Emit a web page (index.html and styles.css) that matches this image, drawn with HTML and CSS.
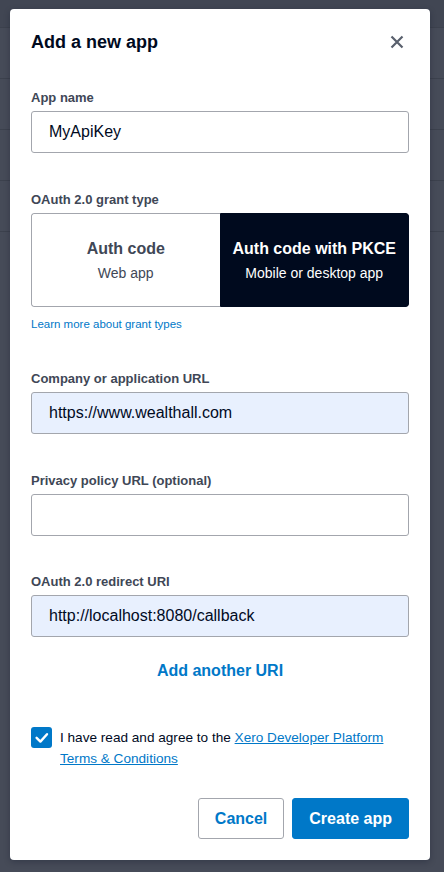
FILE: index.html
```html
<!DOCTYPE html>
<html lang="en">
<head>
<meta charset="utf-8">
<title>Add a new app</title>
<link rel="stylesheet" href="styles.css">
</head>
<body>
<div class="backdrop">
  <div class="bg-row bg-row-top"></div>
  <div class="bg-row"></div>
  <div class="bg-row"></div>
  <div class="bg-row"></div>
  <div class="bg-row bg-row-last"></div>
</div>

<div class="modal" role="dialog" aria-labelledby="modal-title">
  <div class="modal-header">
    <h1 id="modal-title" class="modal-title">Add a new app</h1>
    <button class="close-btn" aria-label="Close">
      <svg width="14" height="14" viewBox="0 0 14 14" aria-hidden="true">
        <path d="M1.5 1.5 L12.5 12.5 M12.5 1.5 L1.5 12.5" stroke="#59606d" stroke-width="2.2" stroke-linecap="butt" fill="none"/>
      </svg>
    </button>
  </div>

  <div class="field">
    <label class="label">App name</label>
    <div class="input">MyApiKey</div>
  </div>

  <div class="field field-grant">
    <label class="label">OAuth 2.0 grant type</label>
    <div class="toggle">
      <div class="toggle-opt">
        <div class="toggle-title">Auth code</div>
        <div class="toggle-sub">Web app</div>
      </div>
      <div class="toggle-opt toggle-opt-active">
        <div class="toggle-title">Auth code with PKCE</div>
        <div class="toggle-sub">Mobile or desktop app</div>
      </div>
    </div>
    <a class="small-link" href="#">Learn more about grant types</a>
  </div>

  <div class="field">
    <label class="label">Company or application URL</label>
    <div class="input input-filled">https://www.wealthall.com</div>
  </div>

  <div class="field field-tight">
    <label class="label">Privacy policy URL (optional)</label>
    <div class="input"></div>
  </div>

  <div class="field field-last">
    <label class="label">OAuth 2.0 redirect URI</label>
    <div class="input input-filled">http://localhost:8080/callback</div>
  </div>

  <div class="add-uri"><a href="#" class="add-uri-link">Add another URI</a></div>

  <div class="agree">
    <span class="checkbox">
      <svg width="21" height="21" viewBox="0 0 21 21" aria-hidden="true">
        <path d="M5.6 10.8 L9.4 14.6 L16 7.2" stroke="#fff" stroke-width="2.4" fill="none" stroke-linecap="round" stroke-linejoin="round"/>
      </svg>
    </span>
    <p class="agree-text">I have read and agree to the <a href="#" class="terms-link">Xero Developer Platform Terms &amp; Conditions</a></p>
  </div>

  <div class="actions">
    <button class="btn btn-secondary">Cancel</button>
    <button class="btn btn-primary">Create app</button>
  </div>
</div>
</body>
</html>
```

FILE: styles.css
```css
* { box-sizing: border-box; }

html, body {
  margin: 0;
  padding: 0;
}

body {
  background: #464b58;
  font-family: "Liberation Sans", Arial, sans-serif;
  color: #000a1e;
  height: 872px;
  overflow: hidden;
  position: relative;
}

.backdrop {
  display: flex;
  flex-direction: column;
}

.bg-row {
  height: 51px;
  border-bottom: 1px solid #3c414d;
}

.bg-row-top {
  height: 28px;
  background: #414653;
}

.bg-row-last {
  height: 51px;
}

.modal {
  position: absolute;
  top: 9px;
  left: 10px;
  width: 420px;
  height: 851px;
  background: #fff;
  border-radius: 4px;
  padding: 21px 21px 21px 21px;
  box-shadow: 0 2px 6px rgba(0, 10, 30, 0.25);
}

.modal-header {
  display: flex;
  align-items: center;
  justify-content: space-between;
  height: 24px;
  margin-bottom: 36px;
}

.modal-title {
  margin: 0;
  font-size: 18px;
  line-height: 24px;
  font-weight: bold;
  color: #000a1e;
}

.close-btn {
  border: 0;
  background: none;
  padding: 0;
  width: 14px;
  height: 14px;
  margin-right: 5px;
  display: flex;
}

.field {
  display: flex;
  flex-direction: column;
  margin-bottom: 39px;
}

.field-grant {
  margin-bottom: 40px;
}

.field-tight {
  margin-bottom: 38px;
}

.field-last {
  margin-bottom: 24px;
}

.label {
  font-size: 13px;
  line-height: 16px;
  font-weight: bold;
  color: #404756;
  margin-bottom: 5px;
}

.input {
  height: 42px;
  border: 1px solid #a3a6ad;
  border-radius: 3px;
  padding: 0 16px 0 17px;
  font-size: 16px;
  line-height: 40px;
  color: #000a1e;
  background: #fff;
}

.input-filled {
  background: #e8f0fe;
}

.toggle {
  display: flex;
  height: 94px;
  border-radius: 3px;
  overflow: hidden;
}

.toggle-opt {
  flex: 1;
  display: flex;
  flex-direction: column;
  align-items: center;
  justify-content: center;
  gap: 7px;
  border: 1px solid #a3a6ad;
  border-right: 0;
  border-radius: 3px 0 0 3px;
  color: #404756;
}

.toggle-opt-active {
  background: #000a1e;
  border: 1px solid #000a1e;
  border-radius: 0 3px 3px 0;
  color: #fff;
}

.toggle-title {
  font-size: 16px;
  line-height: 19px;
  font-weight: bold;
}

.toggle-sub {
  font-size: 14px;
  line-height: 17px;
}

.small-link {
  margin-top: 10px;
  font-size: 11.5px;
  line-height: 14px;
  color: #0078c8;
  text-decoration: none;
  align-self: flex-start;
}

.add-uri {
  display: flex;
  justify-content: center;
  margin-bottom: 46px;
}

.add-uri-link {
  font-size: 16px;
  line-height: 20px;
  font-weight: bold;
  color: #0078c8;
  text-decoration: none;
}

.agree {
  display: flex;
  align-items: flex-start;
  gap: 8px;
  margin-bottom: 29px;
}

.checkbox {
  flex: none;
  width: 21px;
  height: 21px;
  border-radius: 3px;
  background: #0078c8;
  display: flex;
}

.agree-text {
  margin: 0;
  font-size: 13.6px;
  line-height: 21px;
  color: #000a1e;
}

.terms-link {
  color: #0078c8;
  text-decoration: underline;
}

.actions {
  display: flex;
  justify-content: flex-end;
  gap: 8px;
}

.btn {
  height: 41px;
  padding: 0 16px;
  border-radius: 3px;
  font-family: "Liberation Sans", Arial, sans-serif;
  font-size: 16px;
  font-weight: bold;
  cursor: pointer;
}

.btn-secondary {
  background: #fff;
  border: 1px solid #a3a6ad;
  color: #0078c8;
}

.btn-primary {
  background: #0078c8;
  border: 1px solid #0078c8;
  color: #fff;
}
```
